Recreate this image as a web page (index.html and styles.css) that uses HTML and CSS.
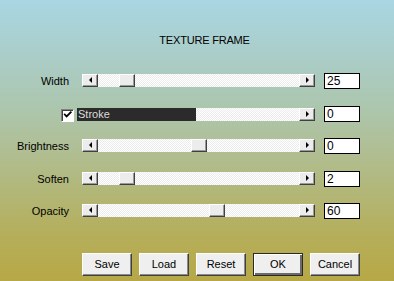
FILE: index.html
```html
<!DOCTYPE html>
<html>
<head>
<meta charset="utf-8">
<link rel="stylesheet" href="styles.css">
</head>
<body>
<div class="dialog">
  <div class="title">TEXTURE FRAME</div>
  <div class="rows">
    <div class="row">
      <div class="label">Width</div>
      <div class="scroll">
        <div class="arrow left"><span class="tri-l"></span></div>
        <div class="track"><div class="thumb" style="left:21px"></div></div>
        <div class="arrow right"><span class="tri-r"></span></div>
      </div>
      <div class="value">25</div>
    </div>
    <div class="row">
      <div class="check">
        <svg width="11" height="11" viewBox="0 0 11 11"><path d="M2 4.5 L4 6.5 L8.5 2" fill="none" stroke="#000" stroke-width="2" stroke-linecap="square"/></svg>
      </div>
      <div class="scroll stroke">
        <div class="dark">Stroke</div>
        <div class="track"></div>
        <div class="arrow right"><span class="tri-r"></span></div>
      </div>
      <div class="value">0</div>
    </div>
    <div class="row">
      <div class="label">Brightness</div>
      <div class="scroll">
        <div class="arrow left"><span class="tri-l"></span></div>
        <div class="track"><div class="thumb" style="left:93px"></div></div>
        <div class="arrow right"><span class="tri-r"></span></div>
      </div>
      <div class="value">0</div>
    </div>
    <div class="row">
      <div class="label">Soften</div>
      <div class="scroll">
        <div class="arrow left"><span class="tri-l"></span></div>
        <div class="track"><div class="thumb" style="left:21px"></div></div>
        <div class="arrow right"><span class="tri-r"></span></div>
      </div>
      <div class="value">2</div>
    </div>
    <div class="row">
      <div class="label">Opacity</div>
      <div class="scroll">
        <div class="arrow left"><span class="tri-l"></span></div>
        <div class="track"><div class="thumb" style="left:111px"></div></div>
        <div class="arrow right"><span class="tri-r"></span></div>
      </div>
      <div class="value">60</div>
    </div>
  </div>
  <div class="buttons">
    <div class="btn">Save</div>
    <div class="btn">Load</div>
    <div class="btn">Reset</div>
    <div class="btn default">OK</div>
    <div class="btn">Cancel</div>
  </div>
</div>
</body>
</html>
```
FILE: styles.css
```css
html, body {
  margin: 0;
  padding: 0;
}
body {
  font-family: "Liberation Sans", Arial, sans-serif;
  font-size: 11px;
  color: #000;
}
.dialog {
  width: 394px;
  height: 281px;
  display: flex;
  flex-direction: column;
  background: linear-gradient(to bottom, #a9d6e3 0%, #aacdc8 20%, #acc6ae 38%, #b0bf96 52%, #b2b778 68%, #b5ae5a 84%, #b7a846 100%);
  overflow: hidden;
}
.title {
  margin-top: 34px;
  line-height: 13px;
  height: 13px;
  padding-left: 15px;
  text-align: center;
  letter-spacing: -0.2px;
}
.rows {
  margin-top: 26px;
  display: flex;
  flex-direction: column;
  gap: 16.5px;
}
.row {
  display: flex;
  align-items: flex-start;
  height: 16px;
}
.label {
  width: 69px;
  margin-right: 13px;
  text-align: right;
  line-height: 16px;
}
.scroll {
  display: flex;
  width: 233px;
  height: 13px;
  margin-top: 1px;
}
.scroll.stroke {
  width: 238px;
  margin-left: 3px;
  margin-top: 2px;
}
.check {
  margin-left: 61px;
  margin-top: 3px;
  width: 13px;
  height: 13px;
  box-sizing: border-box;
  background: #fff;
  border-top: 1px solid #808080;
  border-left: 1px solid #808080;
  border-right: 1px solid #fff;
  border-bottom: 1px solid #fff;
  box-shadow: inset 1px 1px 0 #404040;
  display: flex;
  align-items: center;
  justify-content: center;
}
.check svg {
  display: block;
  margin: 1px 0 0 1px;
}
.dark {
  width: 119px;
  background: #2b2b2b;
  color: #dcdcdc;
  line-height: 13px;
  padding-left: 1px;
  box-sizing: border-box;
}
.track {
  flex: 1;
  position: relative;
  background: conic-gradient(#ececec 25%, #fff 0 50%, #ececec 0 75%, #fff 0) 0 0 / 2px 2px;
}
.arrow, .thumb {
  box-sizing: border-box;
  width: 16px;
  height: 13px;
  background: #ececec;
  border-top: 1px solid #fff;
  border-left: 1px solid #fff;
  border-right: 1px solid #404040;
  border-bottom: 1px solid #404040;
  box-shadow: inset -1px -1px 0 #9a9a9a;
}
.arrow {
  display: flex;
  align-items: center;
  justify-content: center;
}
.thumb {
  position: absolute;
  top: 0;
}
.tri-l, .tri-r {
  width: 0;
  height: 0;
  border-top: 3px solid transparent;
  border-bottom: 3px solid transparent;
  margin-bottom: 1px;
}
.tri-l {
  border-right: 3px solid #000;
}
.tri-r {
  border-left: 3px solid #000;
}
.value {
  margin-left: 9px;
  width: 36px;
  height: 16px;
  box-sizing: border-box;
  border: 1px solid #000;
  background: #fff;
  font-size: 12px;
  line-height: 14px;
  padding-left: 2px;
}
.buttons {
  margin-top: 34px;
  display: flex;
  gap: 7px;
  padding-left: 82px;
}
.btn {
  width: 50px;
  height: 23px;
  box-sizing: border-box;
  background: #efefef;
  border-top: 1px solid #fff;
  border-left: 1px solid #fff;
  border-right: 1px solid #404040;
  border-bottom: 1px solid #404040;
  box-shadow: inset -1px -1px 0 #8a8a8a;
  text-align: center;
  line-height: 21px;
}
.btn.default {
  border: 1px solid #2a2a2a;
  box-shadow: inset 1px 1px 0 #fff, inset -2px -2px 0 #6a6a6a;
}
```
